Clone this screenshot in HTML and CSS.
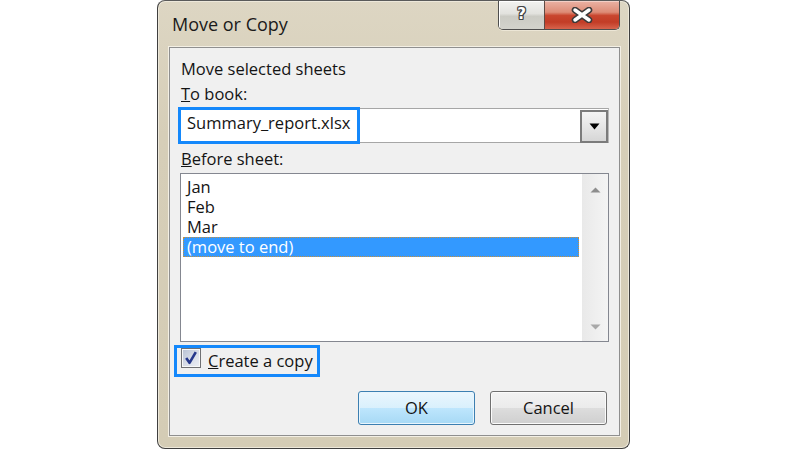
FILE: index.html
```html
<!DOCTYPE html>
<html lang="en">
<head>
<meta charset="utf-8">
<title>Move or Copy</title>
<link rel="stylesheet" href="styles.css">
</head>
<body>
<div class="stage">
  <div class="dialog">
    <div class="titlebar">
      <span class="title">Move or Copy</span>
      <div class="caption-buttons">
        <span class="cap help">?</span>
        <span class="cap close">
          <svg width="22" height="16" viewBox="0 0 22 16">
            <path d="M4 3 L18 13 M18 3 L4 13" stroke="#3b3b3b" stroke-width="6.5" stroke-linecap="round"/>
            <path d="M4 3 L18 13 M18 3 L4 13" stroke="#ffffff" stroke-width="3.5" stroke-linecap="round"/>
          </svg>
        </span>
      </div>
    </div>
    <div class="client">
      <div class="label">Move selected sheets</div>
      <div class="label gap-small"><u>T</u>o book:</div>
      <div class="combo">
        <span class="combo-text">Summary_report.xlsx</span>
        <span class="combo-btn">
          <svg width="11" height="7" viewBox="0 0 11 7"><path d="M0.5 0.5 H10.5 L5.5 6.5 Z" fill="#000"/></svg>
        </span>
        <span class="highlight"></span>
      </div>
      <div class="label gap-mid"><u>B</u>efore sheet:</div>
      <div class="listbox">
        <ul class="items">
          <li class="item"><span class="item-text">Jan</span></li>
          <li class="item"><span class="item-text">Feb</span></li>
          <li class="item"><span class="item-text">Mar</span></li>
          <li class="item selected"><span class="item-text">(move to end)</span></li>
        </ul>
        <div class="scrollbar">
          <svg width="11" height="6" viewBox="0 0 11 6"><path d="M0.5 5.5 H10.5 L5.5 0.5 Z" fill="#8d8d8d"/></svg>
          <svg width="11" height="6" viewBox="0 0 11 6"><path d="M0.5 0.5 H10.5 L5.5 5.5 Z" fill="#a8a8a8"/></svg>
        </div>
      </div>
      <div class="check-row">
        <span class="checkbox">
          <svg class="checkmark" width="14" height="14" viewBox="0 0 14 14"><path d="M2.2 7 L5.5 11.8 L11.8 1.2" fill="none" stroke="#26388c" stroke-width="2.6" stroke-linejoin="round"/></svg>
        </span>
        <span class="check-label"><u>C</u>reate a copy</span>
      </div>
      <div class="buttons">
        <span class="btn ok">OK</span>
        <span class="btn">Cancel</span>
      </div>
    </div>
  </div>
</div>
</body>
</html>
```
FILE: styles.css
```css
* { box-sizing: border-box; }

body {
  margin: 0;
  background: #ffffff;
  font-family: "Open Sans", "Noto Sans", "DejaVu Sans", sans-serif;
  font-size: 16.5px;
  color: #141414;
}

.stage {
  display: flex;
  justify-content: center;
}

.dialog {
  width: 473px;
  height: 449px;
  border: 1px solid #3f3f3f;
  border-top-color: #5a5a5a;
  border-radius: 8px;
  padding: 0 9px 12px 11px;
  background: linear-gradient(#ddd6c3, #d6ceb8 30%, #d4ccb5);
  box-shadow: inset 0 0 0 1px #ede8da;
  display: flex;
  flex-direction: column;
}

.titlebar {
  height: 46px;
  display: flex;
  justify-content: space-between;
  align-items: flex-start;
}

.title {
  padding: 13px 0 0 3px;
  font-size: 18px;
  line-height: 20px;
  color: #1a1a1a;
}

.caption-buttons {
  display: flex;
  height: 29px;
  border: 1px solid #4e4e4e;
  border-top: none;
  border-radius: 0 0 5px 5px;
  overflow: hidden;
  box-shadow: 0 1px 0 #ece6d6;
}

.cap {
  display: flex;
  justify-content: center;
  align-items: center;
}

.help {
  width: 45px;
  padding-bottom: 3px;
  background: linear-gradient(#f2f2f0, #e2e2de 45%, #cbcbc4 55%, #d3d3cc);
  color: #ffffff;
  font-family: "DejaVu Sans", sans-serif;
  font-weight: bold;
  font-size: 15px;
  text-shadow: 1px 0 0 #444, -1px 0 0 #444, 0 1px 0 #444, 0 -1px 0 #444,
               1px 1px 0 #444, -1px -1px 0 #444, 1px -1px 0 #444, -1px 1px 0 #444;
  box-shadow: inset 1px 1px 0 #ffffff;
}

.close {
  width: 75px;
  padding-bottom: 1px;
  border-left: 1px solid #5e4a44;
  background: linear-gradient(#eab2a4, #dd8c77 40%, #c9462f 52%, #c23c26 75%, #d7634c);
  box-shadow: inset 0 1px 0 #f3cfc6;
}

.client {
  flex: 1;
  border: 1px solid #8f8f8f;
  background: #f0f0f0;
  box-shadow: 0 0 0 1px #f3efe4;
  padding: 11px 10px 10px 9px;
  display: flex;
  flex-direction: column;
}

.label {
  line-height: 20px;
  padding-left: 2px;
}

.gap-small { margin-top: 5px; }
.gap-mid { margin-top: 6px; }

.combo {
  position: relative;
  margin-top: 4px;
  height: 35px;
  border: 1px solid #a6a6a6;
  border-right-color: #b8b8b8;
  background: #ffffff;
  display: flex;
  justify-content: space-between;
  align-items: flex-start;
}

.combo-text {
  padding: 4px 0 0 7px;
  line-height: 20px;
}

.combo-btn {
  flex: none;
  margin-top: 1px;
  width: 28px;
  height: 33px;
  border: 2px solid #7b7b7b;
  background: linear-gradient(#f4f4f4, #e6e6e6 50%, #d6d6d6);
  display: flex;
  justify-content: center;
  align-items: center;
}

.highlight {
  position: absolute;
  left: -2px;
  top: -2px;
  width: 182px;
  height: 37px;
  border: 3px solid #1488fb;
}

.listbox {
  margin: 4px 0 0 1px;
  height: 169px;
  border: 1px solid #848790;
  background: #ffffff;
  display: flex;
}

.items {
  list-style: none;
  margin: 0;
  padding: 3px 3px 0 2px;
  flex: 1;
}

.item {
  height: 20px;
  padding-left: 4px;
  display: flex;
  align-items: center;
}

.item-text {
  display: inline-block;
  line-height: 20px;
  height: 20px;
}

.item.selected {
  background: #3399ff;
  color: #ffffff;
  outline: 1px dotted #c8903c;
  outline-offset: -1px;
}

.scrollbar {
  flex: none;
  width: 26px;
  background: linear-gradient(to right, #e9e9e9, #f4f4f4);
  display: flex;
  flex-direction: column;
  justify-content: space-between;
  align-items: center;
  padding: 13px 0 11px;
}

.check-row {
  align-self: flex-start;
  margin: 3px 0 0 -5px;
  height: 32px;
  border: 3px solid #1488fb;
  padding: 0 4px 0 4px;
  display: flex;
  align-items: flex-start;
  gap: 7px;
}

.checkbox {
  flex: none;
  display: block;
  width: 20px;
  height: 20px;
  border: 1px solid #6f7073;
  background: linear-gradient(135deg, #b7c0d2, #d9dee9 55%, #eef0f5);
  box-shadow: inset 0 0 0 1px #f8f8f8;
  padding: 2px;
}

.checkmark {
  display: block;
}

.check-label {
  margin-top: 3px;
  line-height: 20px;
}

.buttons {
  margin-top: 14px;
  display: flex;
  justify-content: flex-end;
  gap: 15px;
  padding-right: 2px;
}

.btn {
  width: 117px;
  height: 34px;
  border: 1px solid #707070;
  border-radius: 3px;
  background: linear-gradient(#f3f3f3, #ebebeb 50%, #dddddd 50%, #cfcfcf);
  box-shadow: inset 0 0 0 1px #fbfbfb;
  display: flex;
  justify-content: center;
  align-items: center;
  line-height: 20px;
}

.btn.ok {
  border-color: #3c7fb1;
  background: linear-gradient(#eaf6fd, #d9f0fc 50%, #bee6fd 50%, #a7d9f5);
  box-shadow: inset 0 0 0 1px #e8f5fd;
}
```
